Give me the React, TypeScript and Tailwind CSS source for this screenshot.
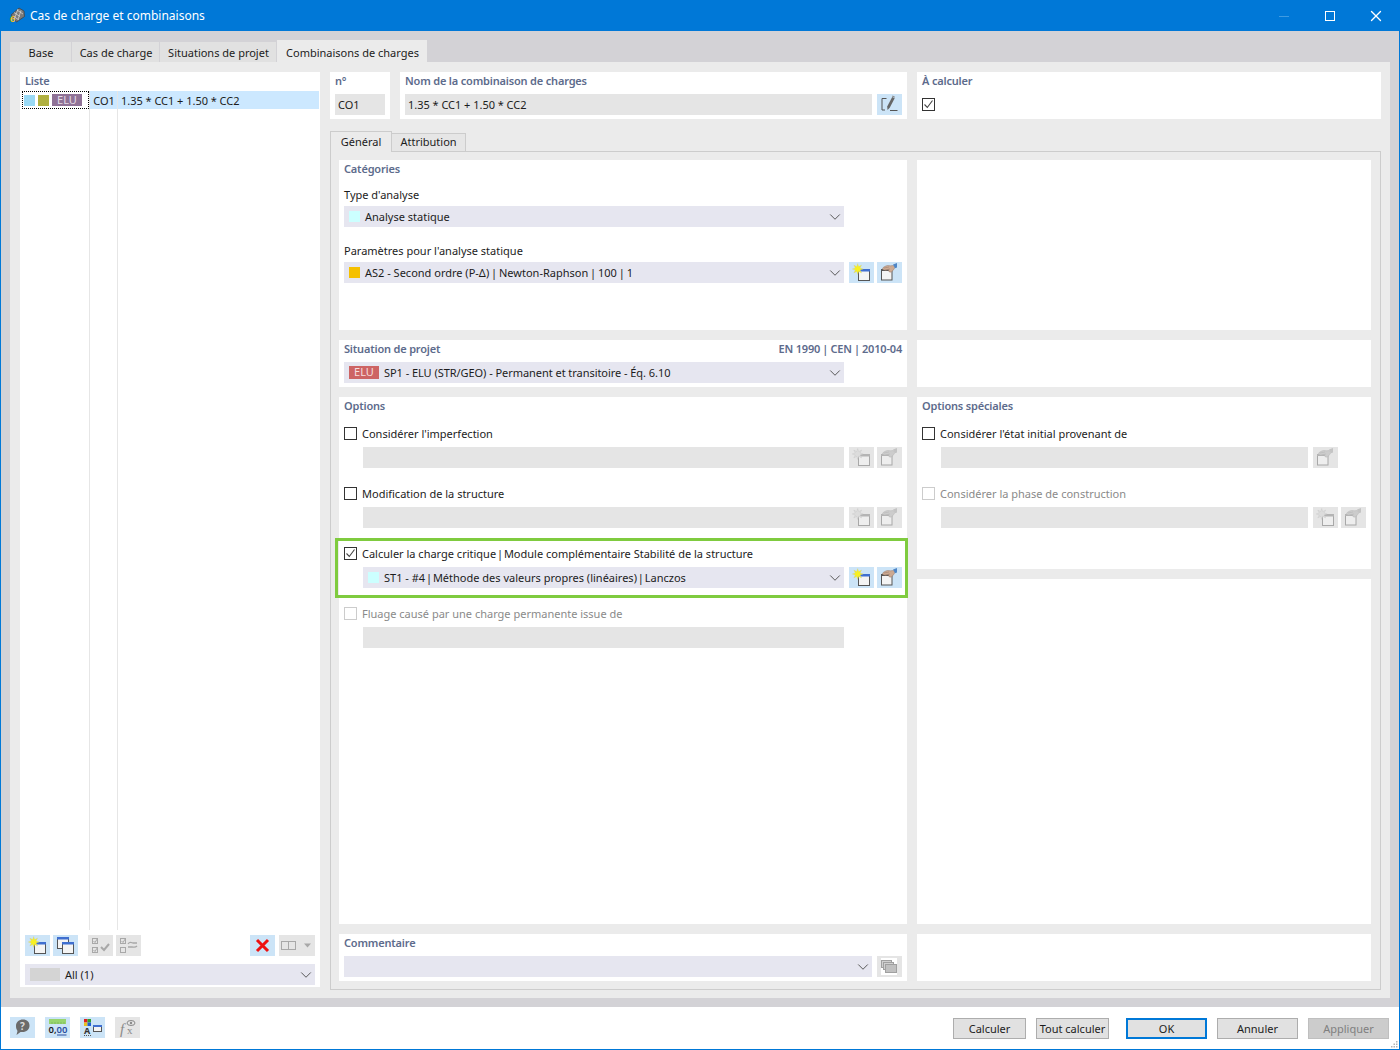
import React from 'react';
import { ChevronDown, X } from 'lucide-react';

const StarWindow = ({ off }: { off?: boolean }) => (
  <svg width="25" height="21" viewBox="0 0 25 21">
    <rect x="9.5" y="7.5" width="11" height="11" fill={off ? '#eeeeee' : '#f4f4f4'} stroke={off ? '#a8a8a8' : '#555555'} />
    <rect x="9" y="7" width="12" height="2.5" fill={off ? '#b4b4b4' : '#3f6fd0'} />
    <polygon points="8.700,1.500 9.700,4.600 12.600,3.100 11.100,6 14.200,7 11.100,8 12.600,10.900 9.700,9.400 8.700,12.500 7.700,9.400 4.800,10.900 6.300,8 3.200,7 6.300,6 4.800,3.100 7.700,4.600" fill={off ? '#dcdcdc' : '#f8f020'} stroke={off ? '#c0c0c0' : '#c8c8a0'} strokeWidth="0.3" />
  </svg>
);

const HandWindow = ({ off }: { off?: boolean }) => (
  <svg width="25" height="21" viewBox="0 0 25 21">
    <rect x="4.5" y="7.5" width="10.5" height="10.5" fill={off ? '#eeeeee' : '#f4f4f4'} stroke={off ? '#a8a8a8' : '#555555'} />
    <rect x="4" y="7" width="11" height="2" fill={off ? '#b4b4b4' : '#555555'} />
    <path d="M5.500 6.500c.5-1.500 3-2.500 5-3l3 .3 3-.3 1.500 2-2 3-2 1.700-2-.5-.5-2-3 .5-2.500-.5z" fill={off ? '#cccccc' : '#cdaa92'} stroke={off ? '#b5b5b5' : '#94786a'} strokeWidth="0.5" />
    <path d="M7 6l5-1M8 8l5-1" stroke={off ? '#b5b5b5' : '#94786a'} strokeWidth="0.5" />
    <path d="M16 2.500l4-1.500v4.500l-2 .8-1-2z" fill={off ? '#c4c4c4' : '#4f86c6'} />
  </svg>
);

const PencilBox = () => (
  <svg width="25" height="21" viewBox="0 0 25 21" fill="none">
    <path d="M9.500 4.500h-4.500v11.500h3M13 16.500h7.500" stroke="#555555" />
    <path d="M10.500 16l-.3-3.500 5-9.500 2.500 1.300-5 9.500z" fill="#666666" />
    <path d="M15.500 1.500l2.500 1.300-.5 1-2.500-1.300z" fill="#888888" />
  </svg>
);

const ChecksOn = () => (
  <svg width="25" height="21" viewBox="0 0 25 21" fill="none" stroke="#a8a8a8">
    <rect x="4.5" y="3.5" width="5" height="5" />
    <rect x="4.5" y="12.5" width="5" height="5" />
    <path d="M5.500 6l1.500 1.500 2.500-4M5.500 15l1.500 1.500 2.500-4" />
    <path d="M13 12l3 3 5-6" strokeWidth="2" />
  </svg>
);

const ChecksSwap = () => (
  <svg width="25" height="21" viewBox="0 0 25 21" fill="none" stroke="#a8a8a8">
    <rect x="4.5" y="3.5" width="5" height="5" />
    <rect x="4.5" y="12.5" width="5" height="5" />
    <path d="M5.500 6l1.500 1.500 2.500-4" />
    <path d="M12 9c2-3 4-1 5-1h4M12 12h4c2 0 3 1 5-1" strokeWidth="1.3" />
  </svg>
);

const TwoWindows = () => (
  <svg width="25" height="21" viewBox="0 0 25 21">
    <rect x="4.5" y="2.5" width="11" height="11" fill="#f4f4f4" stroke="#555555" />
    <rect x="4" y="2" width="12" height="2.5" fill="#3f6fd0" />
    <rect x="9.5" y="7.5" width="11" height="11" fill="#f4f4f4" stroke="#555555" />
    <rect x="9" y="7" width="12" height="2.5" fill="#3f6fd0" />
  </svg>
);

const Stack = () => (
  <svg width="25" height="21" viewBox="0 0 25 21">
    <rect x="4" y="2" width="16" height="17" fill="#ffffff" />
    <rect x="4.5" y="4.5" width="10" height="7" fill="#d0d0d0" stroke="#a0a0a0" />
    <rect x="6.5" y="6.5" width="10" height="7" fill="#d0d0d0" stroke="#a0a0a0" />
    <rect x="8.5" y="8.5" width="11" height="8" fill="#c0c0c0" stroke="#a0a0a0" />
  </svg>
);

const Btn = ({ on, children, wide }: { on?: boolean; children: React.ReactNode; wide?: boolean }) => (
  <div className={`flex h-[21px] shrink-0 items-center ${wide ? 'w-[36px]' : 'w-[25px]'} ${on ? 'bg-[#cce4f7]' : 'bg-[#e5e5e5]'}`}>{children}</div>
);

const Heading = ({ children }: { children: React.ReactNode }) => (
  <div className="h-[18px] text-[11px] leading-[18px] font-semibold tracking-[-0.18px] text-[#5d6b8c]">{children}</div>
);

const Label = ({ children }: { children: React.ReactNode }) => <div className="h-[18px] leading-[18px]">{children}</div>;

// the pipes sit tighter in the original than the font's own spacing
const Sep = ({ gap = '-mx-[2px]' }: { gap?: string }) => <span className={gap}> | </span>;

const Check = ({ on, off, label }: { on?: boolean; off?: boolean; label?: React.ReactNode }) => (
  <div className={`flex h-[18px] items-center gap-[5px] ${off ? 'text-[#8a8a8a]' : ''}`}>
    <div className={`-mt-[2px] flex h-[13px] w-[13px] shrink-0 items-center justify-center border bg-white ${off ? 'border-[#cccccc]' : 'border-[#333333]'}`}>
      {on && (
        <svg width="11" height="11" viewBox="0 0 11 11" fill="none">
          <path d="M1.500 5.500l2.800 3 5.200-7" stroke="#444444" strokeWidth="1.1" />
        </svg>
      )}
    </div>
    {label && <span>{label}</span>}
  </div>
);

const Select = ({ w, children }: { w: string; children: React.ReactNode }) => (
  <div className={`flex h-[21px] shrink-0 items-center justify-between bg-[#e6e6f0] pl-[5px] ${w}`}>
    <div className="flex items-center pt-px">{children}</div>
    <ChevronDown size={18} strokeWidth={1.3} color="#555555" />
  </div>
);

const Swatch = ({ color }: { color: string }) => <div className={`-mt-px mr-[5px] h-[11px] w-[11px] ${color}`} />;

const Field = ({ w }: { w: string }) => <div className={`h-[21px] shrink-0 bg-[#e5e5e5] ${w}`} />;

const Card = ({ className, children }: { className: string; children?: React.ReactNode }) => (
  <div className={`bg-white pl-[5px] ${className}`}>{children}</div>
);

const FootBtn = ({ children, kind, w }: { children: string; kind?: 'ok' | 'off'; w: string }) => (
  <div
    className={`flex h-[21px] items-center justify-center pt-[2px] ${w} ${kind === 'off' ? 'border border-[#bfbfbf] bg-[#cccccc] text-[#7f7f7f]' : kind === 'ok' ? 'border-2 border-[#0078d7] bg-[#e1e1e1]' : 'border border-[#adadad] bg-[#e1e1e1]'}`}
  >
    {children}
  </div>
);

export default function App() {
  return (
    <div className="flex h-[1050px] w-[1400px] flex-col border border-[#0078d7] bg-[#d3d2d6] font-['Noto_Sans',sans-serif] text-[11px] text-[#1c1c1c]">
      <div className="flex h-[30px] shrink-0 items-center justify-between bg-[#0078d7] pl-[8px] text-white">
        <div className="flex items-center gap-[5px]">
          <svg width="16" height="18" viewBox="0 0 16 18">
            <path d="M2 8l8-7 5 3 .5 5.500-8 5.500z" fill="#7a7a7a" stroke="#3c3c3c" strokeWidth="0.7" />
            <path d="M5 5.500l6 4M8 3l6 4M4 9l6 4M9 2l-4 11M12 3.500l-3 9" stroke="#dcdcdc" strokeWidth="0.7" />
            <text x="1" y="15" fontSize="9" fontWeight="700" fill="#f0c020">6</text>
          </svg>
          <span className="text-[12px]">Cas de charge et combinaisons</span>
        </div>
        <div className="flex items-center">
          <div className="flex w-[46px] justify-center"><div className="h-px w-[10px] bg-[#3f9be2]" /></div>
          <div className="flex w-[46px] justify-center"><div className="h-[10px] w-[10px] border-[1.5px] border-white" /></div>
          <div className="flex w-[46px] justify-center"><X size={18} strokeWidth={1.8} /></div>
        </div>
      </div>

      <div className="flex h-[31px] shrink-0 items-end gap-px pl-[9px]">
        <div className="flex h-[20px] w-[61px] items-center justify-center bg-[#e1e1e1] pl-px pt-[2px]">Base</div>
        <div className="flex h-[20px] w-[87px] items-center justify-center bg-[#e1e1e1] pl-px pt-[2px]">Cas de charge</div>
        <div className="flex h-[20px] w-[116px] items-center justify-center bg-[#e1e1e1] pl-px pt-[2px]">Situations de projet</div>
        <div className="flex h-[22px] w-[150px] items-center justify-center bg-[#ebebeb] pl-px pt-[4px]">Combinaisons de charges</div>
      </div>

      <div className="mx-[9px] flex h-[936px] shrink-0 gap-[10px] bg-[#ebebeb] pl-[10px] pt-[10px]">
        <div className="flex h-[915px] w-[300px] flex-col bg-white">
          <div className="pl-[5px]"><Heading>Liste</Heading></div>
          <div className="flex min-h-0 flex-1 pl-[2px] pt-px">
            <div className="w-[67px]">
              <div className="flex h-[18px] items-center gap-[3px] border border-dotted border-black pl-px">
                <div className="h-[11px] w-[11px] bg-[#99d9f5]" />
                <div className="h-[11px] w-[11px] bg-[#b0b040]" />
                <div className="flex h-[12px] w-[30px] items-center justify-center bg-[#8f7296] text-[#e4dbe6]">ELU</div>
              </div>
            </div>
            <div className="h-[calc(100%-5px)] w-[29px] border-x border-[#e6e6e6]">
              <div className="flex h-[18px] items-center justify-center bg-[#cce8ff] pl-px pt-[2px]">CO1</div>
            </div>
            <div className="flex-1 pr-px">
              <div className="flex h-[18px] items-center bg-[#cce8ff] pl-[3px] pt-[2px] tracking-[-0.03px]">1.35 * CC1 + 1.50 * CC2</div>
            </div>
          </div>
          <div className="flex h-[21px] shrink-0 items-center px-[5px]">
            <Btn on><StarWindow /></Btn>
            <div className="ml-[3px]"><Btn on><TwoWindows /></Btn></div>
            <div className="ml-[10px]"><Btn><ChecksOn /></Btn></div>
            <div className="ml-[3px]"><Btn><ChecksSwap /></Btn></div>
            <div className="ml-auto">
              <Btn on>
                <svg width="25" height="21" viewBox="0 0 25 21" fill="none">
                  <path d="M7 5l11 11M18 5L7 16" stroke="#ee1111" strokeWidth="3" />
                </svg>
              </Btn>
            </div>
            <div className="ml-[4px]">
              <Btn wide>
                <svg width="36" height="21" viewBox="0 0 36 21" fill="none">
                  <rect x="2.5" y="6.5" width="7" height="8" stroke="#a8a8a8" />
                  <rect x="9.5" y="6.5" width="7" height="8" stroke="#a8a8a8" />
                  <path d="M25 8.500h7l-3.500 4z" fill="#a8a8a8" />
                </svg>
              </Btn>
            </div>
          </div>
          <div className="px-[5px] pb-[2px] pt-[8px]">
            <Select w="w-[290px]">
              <div className="-mt-px mr-[5px] h-[13px] w-[30px] bg-[#d4d4d4]" />
              All (1)
            </Select>
          </div>
        </div>

        <div className="flex w-[1051px] flex-col">
          <div className="flex h-[47px] shrink-0 gap-[10px]">
            <Card className="w-[60px]">
              <Heading>n°</Heading>
              <div className="mt-[4px] flex h-[21px] w-[50px] items-center bg-[#e5e5e5] pl-[3px] pt-px">CO1</div>
            </Card>
            <Card className="w-[507px]">
              <Heading>Nom de la combinaison de charges</Heading>
              <div className="mt-[4px] flex gap-[5px]">
                <div className="flex h-[21px] w-[467px] items-center bg-[#e5e5e5] pl-[3px] pt-px tracking-[-0.03px]">1.35 * CC1 + 1.50 * CC2</div>
                <Btn on><PencilBox /></Btn>
              </div>
            </Card>
            <Card className="flex-1">
              <Heading>À calculer</Heading>
              <div className="mt-[6px]"><Check on /></div>
            </Card>
          </div>

          <div className="mt-[12px] flex h-[20px] shrink-0 items-end">
            <div className="z-10 -mb-px flex h-[21px] w-[62px] items-center justify-center border-x border-t border-[#cccccc] bg-[#ebebeb]">Général</div>
            <div className="flex h-[18px] w-[74px] items-center justify-center border-r border-t border-[#cccccc] bg-[#e6e6e6]">Attribution</div>
          </div>

          <div className="flex h-[839px] shrink-0 gap-[10px] border border-[#cccccc] p-[8px]">
            <div className="flex w-[568px] flex-col gap-[10px]">
              <Card className="h-[170px] shrink-0">
                <Heading>Catégories</Heading>
                <div className="mt-[8px]"><Label>Type d'analyse</Label></div>
                <div className="mt-[2px]">
                  <Select w="w-[500px]"><Swatch color="bg-[#ccffff]" />Analyse statique</Select>
                </div>
                <div className="mt-[15px]"><Label>Paramètres pour l'analyse statique</Label></div>
                <div className="mt-[2px] flex">
                  <Select w="w-[500px]"><Swatch color="bg-[#f5c000]" /><span>AS2 - Second ordre (P-Δ)<Sep gap="-mx-[1px]" />Newton-Raphson<Sep gap="-mx-[1px]" />100<Sep gap="-mx-[1px]" />1</span></Select>
                  <div className="ml-[5px]"><Btn on><StarWindow /></Btn></div>
                  <div className="ml-[3px]"><Btn on><HandWindow /></Btn></div>
                </div>
              </Card>

              <Card className="h-[47px] shrink-0 pr-[5px]">
                <div className="flex justify-between">
                  <Heading>Situation de projet</Heading>
                  <Heading>EN 1990<Sep gap="-mx-[0.5px]" />CEN<Sep gap="-mx-[0.5px]" />2010-04</Heading>
                </div>
                <div className="mt-[4px]">
                  <Select w="w-[500px]">
                    <div className="-mt-px mr-[5px] flex h-[13px] w-[30px] items-center justify-center bg-[#cd6464] text-[#f6dede]">ELU</div>
                    <span className="tracking-[-0.05px]">SP1 - ELU (STR/GEO) - Permanent et transitoire - Éq. 6.10</span>
                  </Select>
                </div>
              </Card>

              <Card className="h-[527px] shrink-0">
                <Heading>Options</Heading>
                <div className="mt-[10px]"><Check label="Considérer l'imperfection" /></div>
                <div className="ml-[19px] mt-[4px] flex">
                  <Field w="w-[481px]" />
                  <div className="ml-[5px]"><Btn><StarWindow off /></Btn></div>
                  <div className="ml-[3px]"><Btn><HandWindow off /></Btn></div>
                </div>
                <div className="mt-[17px]"><Check label="Modification de la structure" /></div>
                <div className="ml-[19px] mt-[4px] flex">
                  <Field w="w-[481px]" />
                  <div className="ml-[5px]"><Btn><StarWindow off /></Btn></div>
                  <div className="ml-[3px]"><Btn><HandWindow off /></Btn></div>
                </div>
                <div className="-ml-[9px] mt-[10px] h-[60px] w-[573px] border-[3px] border-[#7fcb3f] pl-[6px] pt-[4px]">
                  <Check on label={<>Calculer la charge critique<Sep />Module complémentaire Stabilité de la structure</>} />
                  <div className="ml-[19px] mt-[4px] flex">
                    <Select w="w-[481px]"><div className="w-[16px]"><Swatch color="bg-[#ccffff]" /></div><span>ST1 - #4<Sep />Méthode des valeurs propres (linéaires)<Sep />Lanczos</span></Select>
                    <div className="ml-[5px]"><Btn on><StarWindow /></Btn></div>
                    <div className="ml-[3px]"><Btn on><HandWindow /></Btn></div>
                  </div>
                </div>
                <div className="mt-[7px]"><Check off label="Fluage causé par une charge permanente issue de" /></div>
                <div className="ml-[19px] mt-[4px]"><Field w="w-[481px]" /></div>
              </Card>

              <Card className="h-[47px] shrink-0">
                <Heading>Commentaire</Heading>
                <div className="mt-[4px] flex">
                  <Select w="w-[528px]"><span /></Select>
                  <div className="ml-[5px]"><Btn><Stack /></Btn></div>
                </div>
              </Card>
            </div>

            <div className="flex w-[454px] flex-col gap-[10px]">
              <Card className="h-[170px] shrink-0" />
              <Card className="h-[47px] shrink-0" />
              <Card className="h-[172px] shrink-0">
                <Heading>Options spéciales</Heading>
                <div className="mt-[10px]"><Check label="Considérer l'état initial provenant de" /></div>
                <div className="ml-[19px] mt-[4px] flex">
                  <Field w="w-[367px]" />
                  <div className="ml-[5px]"><Btn><HandWindow off /></Btn></div>
                </div>
                <div className="mt-[17px]"><Check off label="Considérer la phase de construction" /></div>
                <div className="ml-[19px] mt-[4px] flex">
                  <Field w="w-[367px]" />
                  <div className="ml-[5px]"><Btn><StarWindow off /></Btn></div>
                  <div className="ml-[3px]"><Btn><HandWindow off /></Btn></div>
                </div>
              </Card>
              <Card className="h-[345px] shrink-0" />
              <Card className="h-[47px] shrink-0" />
            </div>
          </div>
        </div>
      </div>

      <div className="h-[9px] shrink-0" />

      <div className="relative flex min-h-0 flex-1 items-center justify-between bg-white pl-[9px] pr-[10px]">
        <div className="mb-[2px] flex gap-[10px]">
          <Btn on>
            <svg width="25" height="21" viewBox="0 0 25 21">
              <path d="M6 9c0-4 3-6.500 7-6.500s6.500 2.500 6.500 6c0 4-3 6.500-7 6.500l-2 0-4 3 1-4c-1-1.500-1.500-3-1.500-5z" fill="#6b6b6b" />
              <text x="12.5" y="13" fontSize="10" fontWeight="700" fill="#dddddd" textAnchor="middle">?</text>
            </svg>
          </Btn>
          <Btn on>
            <svg width="25" height="21" viewBox="0 0 25 21">
              <rect x="4" y="2" width="17" height="5" fill="#96d46e" />
              <path d="M7 5v2M10 5v2M13 5v2M16 5v2M19 5v2" stroke="#6fa850" strokeWidth="0.6" />
              <text x="3.5" y="16" fontSize="9.5" fontWeight="600" fill="#1c1c1c">0,<tspan fill="#2a4ea0">00</tspan></text>
              <path d="M12 18h9.500" stroke="#2a4ea0" />
            </svg>
          </Btn>
          <Btn on>
            <svg width="25" height="21" viewBox="0 0 25 21">
              <rect x="4" y="2" width="3.500" height="3.500" fill="#e02020" />
              <rect x="7.5" y="2" width="3.500" height="3.500" fill="#30a030" />
              <rect x="4" y="5.500" width="3.500" height="3.500" fill="#e8c020" />
              <rect x="7.5" y="5.500" width="3.500" height="3.500" fill="#2060d0" />
              <text x="4" y="17" fontSize="9" fontWeight="700" fill="#333333">A</text>
              <path d="M4 18.500h7" stroke="#555555" strokeDasharray="1 1" />
              <rect x="13.5" y="8.500" width="8" height="6" fill="#f4f4f4" stroke="#555555" />
              <rect x="13" y="8" width="9" height="2" fill="#3f6fd0" />
            </svg>
          </Btn>
          <Btn>
            <svg width="25" height="21" viewBox="0 0 25 21">
              <text x="5" y="17" fontSize="15" fontStyle="italic" fontFamily="Liberation Serif" fill="#8a8a8a">f</text>
              <text x="12" y="17" fontSize="11" fontFamily="Liberation Serif" fill="#8a8a8a">x</text>
              <ellipse cx="16" cy="6" rx="4" ry="2.500" fill="none" stroke="#8a8a8a" />
              <circle cx="16" cy="6" r="1.200" fill="#8a8a8a" />
            </svg>
          </Btn>
        </div>
        <div className="flex">
          <FootBtn w="w-[73px]">Calculer</FootBtn>
          <div className="ml-[10px]"><FootBtn w="w-[73px]">Tout calculer</FootBtn></div>
          <div className="ml-[17px]"><FootBtn w="w-[81px]" kind="ok">OK</FootBtn></div>
          <div className="ml-[10px]"><FootBtn w="w-[81px]">Annuler</FootBtn></div>
          <div className="ml-[10px]"><FootBtn w="w-[81px]" kind="off">Appliquer</FootBtn></div>
        </div>
        <svg className="absolute bottom-[1px] right-[1px]" width="7" height="7" viewBox="0 0 7 7" fill="#b4b4b4">
          <rect x="5" y="0" width="1.500" height="1.500" />
          <rect x="2.500" y="2.500" width="1.500" height="1.500" />
          <rect x="5" y="2.500" width="1.500" height="1.500" />
          <rect x="0" y="5" width="1.500" height="1.500" />
          <rect x="2.500" y="5" width="1.500" height="1.500" />
          <rect x="5" y="5" width="1.500" height="1.500" />
        </svg>
      </div>
    </div>
  );
}
